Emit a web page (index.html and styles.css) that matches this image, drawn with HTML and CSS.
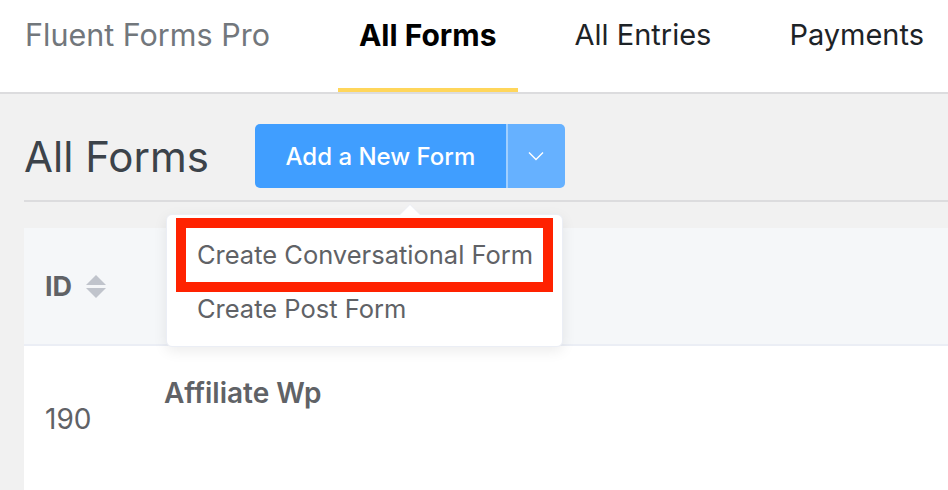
FILE: index.html
```html
<!DOCTYPE html>
<html lang="en">
<head>
    <meta charset="UTF-8">
    <meta name="viewport" content="width=device-width, initial-scale=1.0">
    <title>Fluent Forms Pro - All Forms</title>
    <link rel="stylesheet" href="styles.css">
</head>
<body>
    <!-- Top Navigation -->
    <header class="topbar">
        <span class="brand">Fluent Forms Pro</span>
        <nav class="nav">
            <a class="nav-link active" href="#">All Forms</a>
            <a class="nav-link" href="#">All Entries</a>
            <a class="nav-link" href="#">Payments</a>
        </nav>
    </header>

    <main class="page">
        <!-- Page Heading -->
        <div class="page-head">
            <h1 class="page-title">All Forms</h1>
            <div class="btn-group">
                <button class="btn btn-main">Add a New Form</button>
                <button class="btn btn-caret">
                    <svg width="16" height="10" viewBox="0 0 16 10"><path d="M1 1.5 L8 8.5 L15 1.5" fill="none" stroke="#fff" stroke-width="1.4"/></svg>
                </button>
                <ul class="dropdown">
                    <li class="dropdown-item marked">Create Conversational Form</li>
                    <li class="dropdown-item">Create Post Form</li>
                </ul>
            </div>
        </div>

        <!-- Forms Table -->
        <table class="forms-table">
            <thead>
                <tr>
                    <th class="col-id">ID <span class="sort"><i class="up"></i><i class="down"></i></span></th>
                    <th></th>
                </tr>
            </thead>
            <tbody>
                <tr>
                    <td class="col-id">190</td>
                    <td class="col-title">
                        <strong>Affiliate Wp</strong>
                    </td>
                </tr>
            </tbody>
        </table>
    </main>
</body>
</html>
```

FILE: styles.css
```css
* { margin: 0; padding: 0; box-sizing: border-box; }
body {
    font-family: Inter, "Noto Sans", sans-serif;
    background: #f1f1f1;
    color: #606266;
    overflow: hidden;
}

/* Top Navigation */
.topbar {
    display: flex;
    height: 94px;
    background: #fff;
    border-bottom: 2px solid #dcdcde;
    padding-left: 25px;
    white-space: nowrap;
}
.brand { flex-shrink: 0; font-size: 30.5px; color: #72777c; padding-top: 16px; line-height: 38px; margin-right: 68px; }
.nav { display: flex; gap: 36px; flex-shrink: 0; }
.nav-link {
    display: block;
    flex-shrink: 0;
    padding: 16px 21px 0;
    line-height: 38px;
    font-size: 29px;
    color: #1d2327;
    text-decoration: none;
    border-bottom: 4px solid transparent;
}
.nav-link.active { font-size: 30px; font-weight: 700; color: #000; border-bottom-color: #ffd65b; }

/* Page Heading */
.page { padding-left: 24px; }
.page-head {
    display: flex;
    align-items: center;
    padding: 30px 0 12px;
    border-bottom: 2px solid #dcdcde;
}
.page-title { font-size: 42px; font-weight: 400; color: #3c434a; margin-right: 46px; }
.btn-group { position: relative; display: flex; height: 64px; }
.btn {
    border: none;
    color: #fff;
    font-family: inherit;
    cursor: pointer;
}
.btn-main {
    width: 253px;
    background: #409eff;
    font-size: 24px;
    font-weight: 500;
    border-radius: 5px 0 0 5px;
    border-right: 2px solid #a0cfff;
}
.btn-caret {
    width: 57px;
    background: #66b1ff;
    border-radius: 0 5px 5px 0;
    display: flex;
    align-items: center;
    justify-content: center;
}

/* Dropdown */
.dropdown {
    position: absolute;
    top: 90px;
    left: -89px;
    width: 397px;
    list-style: none;
    background: #fff;
    border: 1px solid #ebeef5;
    border-radius: 6px;
    box-shadow: 0 4px 14px rgba(0, 0, 0, 0.08);
    padding: 13px 19px 10px;
    z-index: 2;
}
.dropdown::before, .dropdown::after {
    content: "";
    position: absolute;
    left: 233px;
    border: 10px solid transparent;
    border-top: 0;
}
.dropdown::before { top: -11px; border-bottom-color: #ebeef5; }
.dropdown::after { top: -10px; border-bottom-color: #fff; }
.dropdown-item {
    height: 54px;
    line-height: 54px;
    padding-left: 11px;
    font-size: 25.5px;
    color: #606266;
}
.dropdown-item.marked { outline: 10px solid #ff2200; }

/* Forms Table */
.forms-table {
    width: 100%;
    margin-top: 26px;
    border-collapse: collapse;
}
.forms-table th {
    height: 117px;
    background: #f5f7f9;
    border-bottom: 2px solid #ebeef5;
    text-align: left;
    font-size: 27px;
    font-weight: 700;
    color: #606266;
}
.forms-table td { height: 150px; background: #fff; font-size: 28px; vertical-align: top; padding-top: 56px; }
.col-id { width: 120px; padding-left: 21px; }
.forms-table td.col-title { padding: 30px 0 0 20px; }
.col-title strong { font-weight: 600; }
.sort { display: inline-flex; flex-direction: column; gap: 3px; vertical-align: middle; margin-left: 8px; position: relative; top: -2px; }
.sort i { display: block; border: 10px solid transparent; }
.sort .up { border-top: 0; border-bottom: 10px solid #c0c4cc; }
.sort .down { border-bottom: 0; border-top: 10px solid #c0c4cc; }
```
